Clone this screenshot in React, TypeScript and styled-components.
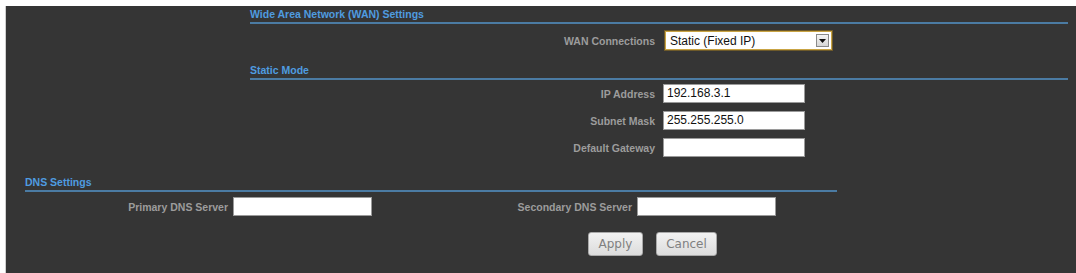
import React from "react";
import styled, { createGlobalStyle } from "styled-components";

const Global = createGlobalStyle`
  html, body { margin: 0; padding: 0; background: #ffffff; }
  body { font-family: "Liberation Sans", Arial, sans-serif; }
`;

const Panel = styled.div`
  margin: 6px 0 0 5px;
  height: 267px;
  background: #353535;
  border-left: 1px solid #cfcfcf;
  box-sizing: border-box;
  display: flex;
  flex-direction: column;
  overflow: hidden;
`;

const Section = styled.div<{ $left: number; $right: number; $top: number }>`
  margin: ${(p) => p.$top}px ${(p) => p.$right}px 0 ${(p) => p.$left}px;
  display: flex;
  flex-direction: column;
`;

const Heading = styled.div`
  height: 16px;
  line-height: 16px;
  font-size: 10.5px;
  font-weight: bold;
  color: #4f9ce0;
  border-bottom: 2px solid #4b7ba3;
  white-space: nowrap;
`;

const FormGrid = styled.div<{ $top: number }>`
  display: grid;
  grid-template-columns: 405px auto;
  column-gap: 8px;
  row-gap: 8px;
  margin-top: ${(p) => p.$top}px;
  align-items: center;
`;

const Label = styled.label`
  font-size: 10.5px;
  font-weight: bold;
  color: #9c9c9c;
  text-align: right;
  white-space: nowrap;
`;

const TextBox = styled.div<{ $w: number }>`
  width: ${(p) => p.$w}px;
  height: 19px;
  box-sizing: border-box;
  background: #ffffff;
  border: 1px solid #9a9a9a;
  font-size: 12px;
  color: #111;
  line-height: 17px;
  padding-left: 3px;
  font-family: "Liberation Sans", Arial, sans-serif;
`;

const Select = styled.div`
  width: 167px;
  height: 19px;
  margin-left: 2px;
  box-sizing: border-box;
  background: #ffffff;
  border: 1px solid #c9a444;
  box-shadow: 0 0 0 1px #6e5a2a;
  display: flex;
  align-items: center;
  justify-content: space-between;
  font-size: 12px;
  color: #111;
  padding: 0 2px 0 4px;
`;

const DropBtn = styled.div`
  width: 13px;
  height: 13px;
  box-sizing: border-box;
  border: 1px solid #8a8a8a;
  background: linear-gradient(#f4f4f4, #d6d6d6);
  display: flex;
  align-items: center;
  justify-content: center;
`;

const DnsRow = styled.div`
  display: flex;
  align-items: center;
  margin-top: 5px;
`;

const DnsLabel = styled(Label)<{ $w: number }>`
  width: ${(p) => p.$w}px;
  flex: none;
  margin-right: 5px;
`;

const Buttons = styled.div`
  display: flex;
  gap: 13px;
  margin: 16px 0 0 582px;
`;

const Button = styled.button<{ $w: number }>`
  width: ${(p) => p.$w}px;
  height: 24px;
  border: 1px solid #a9a9a9;
  border-radius: 3px;
  background: linear-gradient(#f2f2f2, #dcdcdc);
  color: #808080;
  font-size: 12px;
  font-family: "DejaVu Sans", "Liberation Sans", sans-serif;
  padding: 0;
`;

export default function App() {
  return (
    <>
      <Global />
      <Panel>
        <Section $left={244} $right={8} $top={0}>
          <Heading>Wide Area Network (WAN) Settings</Heading>
          <FormGrid $top={7}>
            <Label>WAN Connections</Label>
            <Select>
              <span>Static (Fixed IP)</span>
              <DropBtn>
                <svg width="7" height="4" viewBox="0 0 7 4">
                  <path d="M0 0 H7 L3.5 4 Z" fill="#111" />
                </svg>
              </DropBtn>
            </Select>
          </FormGrid>
        </Section>
        <Section $left={244} $right={8} $top={12}>
          <Heading>Static Mode</Heading>
          <FormGrid $top={4}>
            <Label>IP Address</Label>
            <TextBox $w={142}>192.168.3.1</TextBox>
            <Label>Subnet Mask</Label>
            <TextBox $w={142}>255.255.255.0</TextBox>
            <Label>Default Gateway</Label>
            <TextBox $w={142} />
          </FormGrid>
        </Section>
        <Section $left={19} $right={239} $top={17}>
          <Heading>DNS Settings</Heading>
          <DnsRow>
            <DnsLabel $w={203}>Primary DNS Server</DnsLabel>
            <TextBox $w={139} />
            <DnsLabel $w={260}>Secondary DNS Server</DnsLabel>
            <TextBox $w={139} />
          </DnsRow>
        </Section>
        <Buttons>
          <Button $w={55}>Apply</Button>
          <Button $w={61}>Cancel</Button>
        </Buttons>
      </Panel>
    </>
  );
}
